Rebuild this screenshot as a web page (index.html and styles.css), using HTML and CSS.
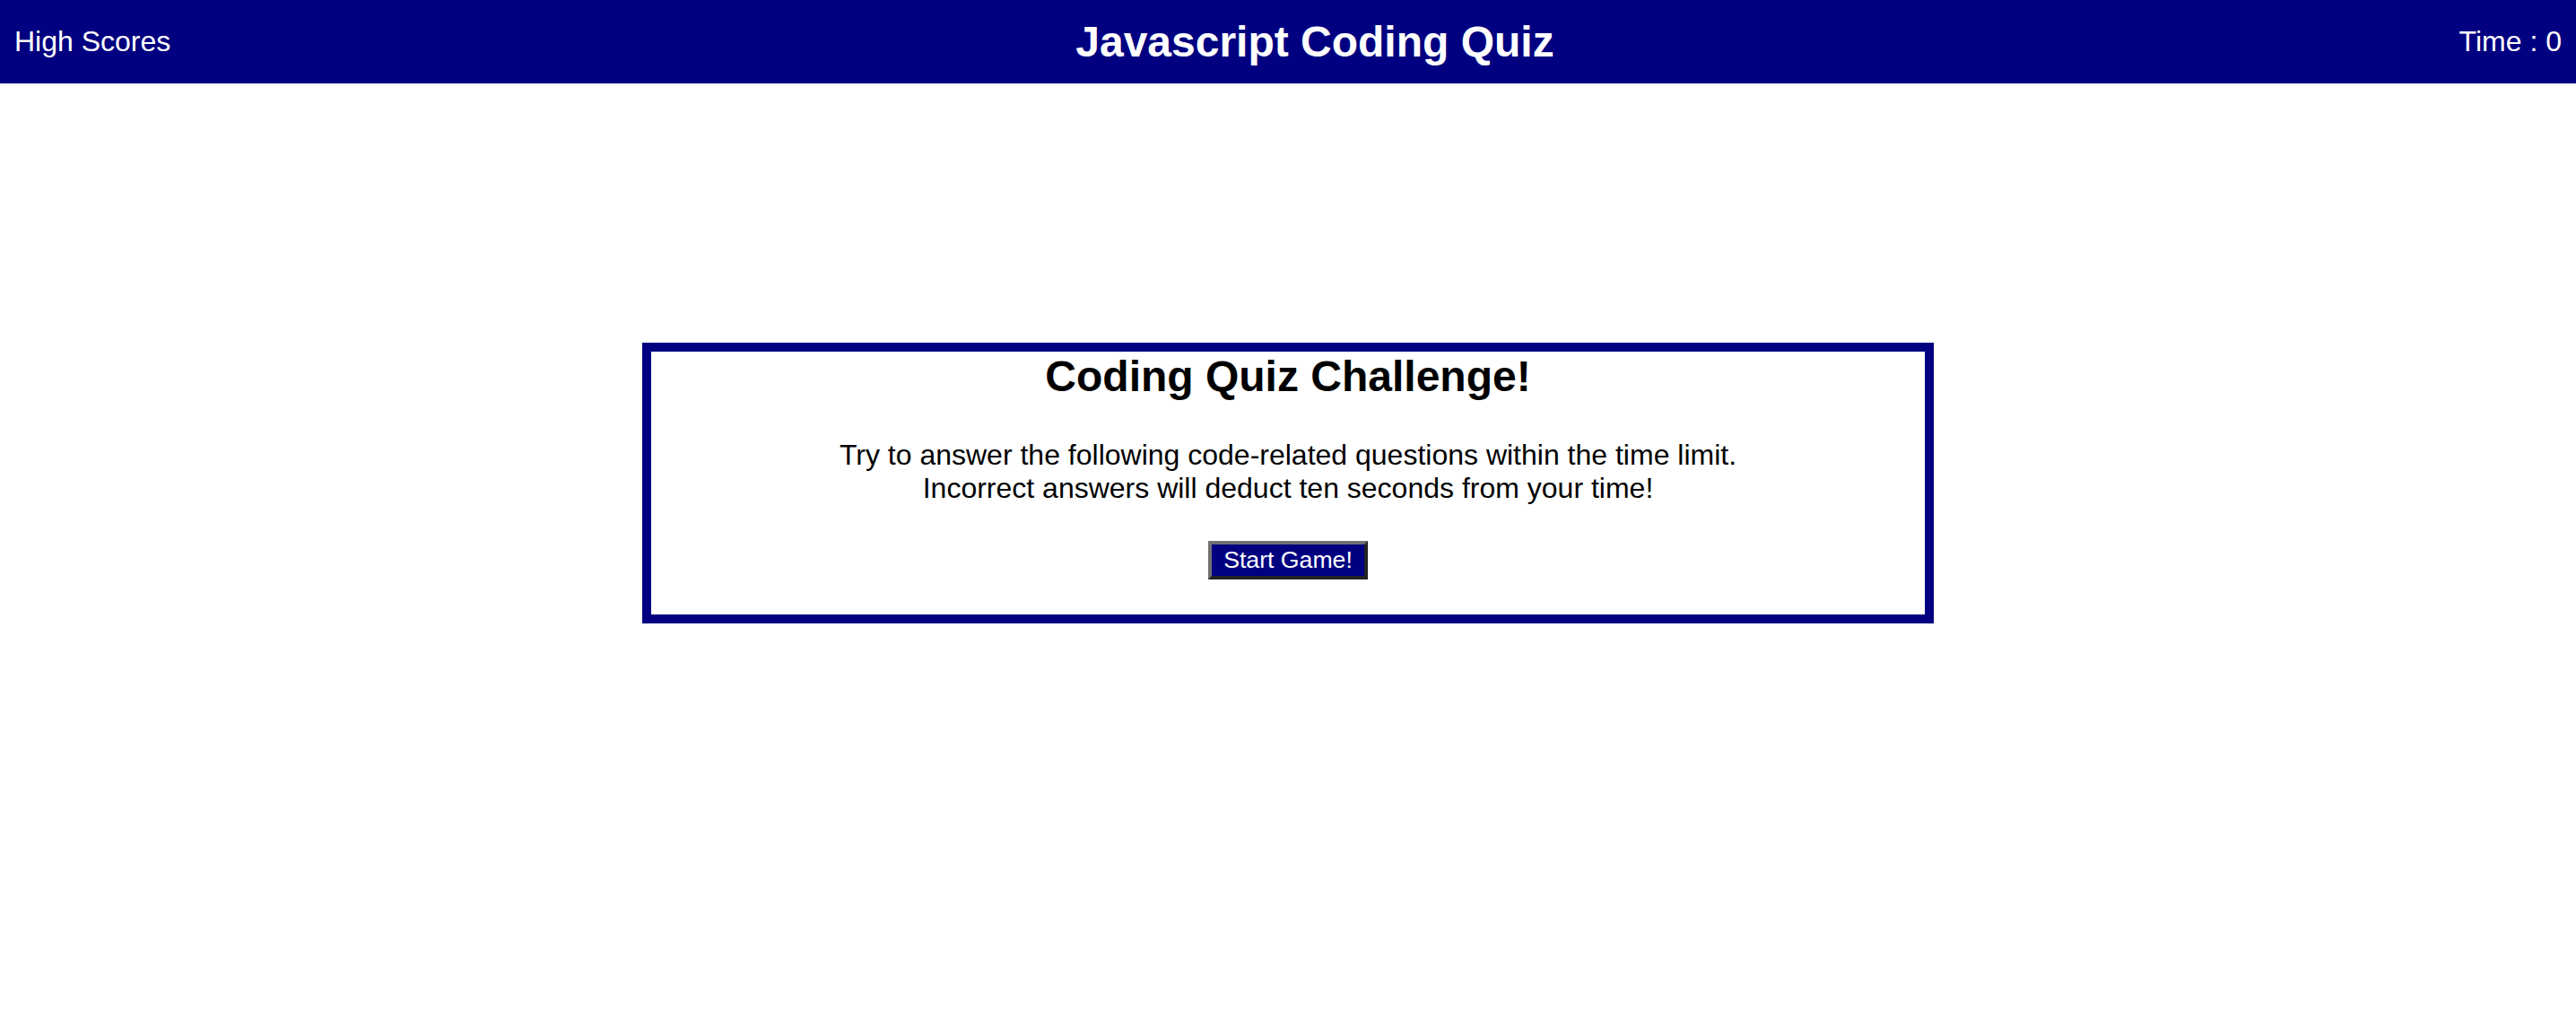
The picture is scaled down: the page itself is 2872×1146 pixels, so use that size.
FILE: index.html
```html
<!DOCTYPE html>
<html lang="en">
<head>
<meta charset="utf-8">
<title>Javascript Coding Quiz</title>
<link rel="stylesheet" href="styles.css">
</head>
<body>
<header class="topbar">
  <a class="scores-link">High Scores</a>
  <h1 class="site-title">Javascript Coding Quiz</h1>
  <div class="timer">Time : 0</div>
</header>
<main class="card">
  <h2 class="card-title">Coding Quiz Challenge!</h2>
  <p class="card-text">Try to answer the following code-related questions within the time limit.<br>Incorrect answers will deduct ten seconds from your time!</p>
  <button class="start-btn">Start Game!</button>
</main>
</body>
</html>
```
FILE: styles.css
```css
html, body {
  margin: 0;
  padding: 0;
  background: #ffffff;
  font-family: "Liberation Sans", Arial, Helvetica, sans-serif;
}

.topbar {
  height: 93px;
  background: #000080;
  color: #ffffff;
  display: flex;
  justify-content: space-between;
  align-items: center;
  padding: 0 16px;
  box-sizing: border-box;
}

.scores-link {
  font-size: 32px;
  color: #ffffff;
  cursor: pointer;
}

.site-title {
  font-size: 48px;
  font-weight: bold;
  margin: 0;
}

.timer {
  font-size: 32px;
}

.card {
  width: 1420px;
  margin: 289px auto 0;
  border: 10px solid #000080;
  text-align: center;
  padding: 0 0 39px;
  color: #000000;
}

.card-title {
  font-size: 48px;
  font-weight: bold;
  margin: 0;
}

.card-text {
  font-size: 32px;
  margin: 42px 0 40px;
}

.start-btn {
  font-family: "Liberation Sans", Arial, Helvetica, sans-serif;
  font-size: 26.67px;
  color: #ffffff;
  background: #000080;
  padding: 2px 13px;
  border-style: solid;
  border-width: 4px;
  border-color: #717171 #222222 #222222 #717171;
  cursor: pointer;
}
```
